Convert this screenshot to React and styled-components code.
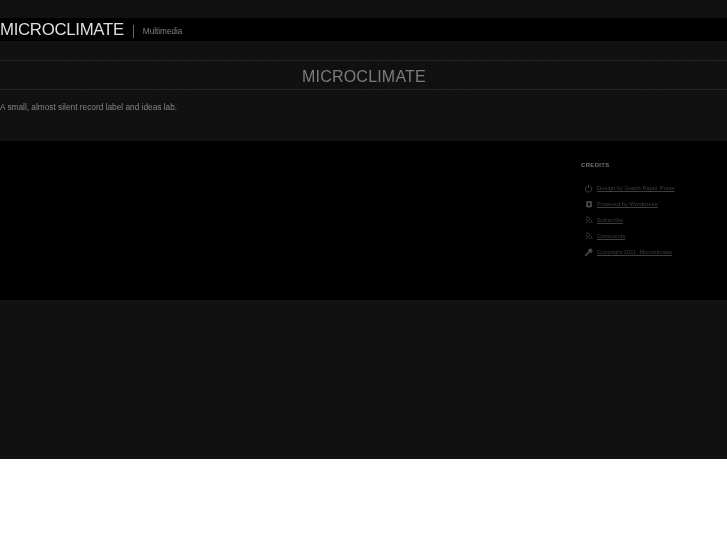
import React from "react";
import styled, { createGlobalStyle } from "styled-components";

const Global = createGlobalStyle`
  html, body { margin: 0; padding: 0; background: #fff; }
  body { font-family: "Liberation Sans", Arial, sans-serif; }
`;

const Page = styled.div`
  background: #111;
  height: 459px;
  padding-top: 18px;
  box-sizing: border-box;
  overflow: hidden;
`;

const Header = styled.header`
  background: #000;
  height: 23px;
  display: flex;
  align-items: center;
`;

const Logo = styled.h1`
  margin: 0;
  font-size: 16.8px;
  letter-spacing: -0.3px;
  font-weight: 400;
  color: #dedede;
  line-height: 23px;
  filter: blur(0.3px);
`;

const Divider = styled.span`
  width: 1px;
  height: 13px;
  margin: 4px 9px 0 9px;
  background: #666;
`;

const Tagline = styled.span`
  font-size: 8.2px;
  color: #808080;
  margin-top: 3px;
  filter: blur(0.35px);
`;

const TitleBand = styled.div`
  margin-top: 19px;
  height: 30px;
  box-sizing: border-box;
  border-top: 1px solid #252525;
  border-bottom: 1px solid #252525;
  background: repeating-linear-gradient(45deg, #0e0e0e 0 1px, #121212 1px 3px);
  display: flex;
  align-items: center;
  justify-content: center;
`;

const Title = styled.h2`
  margin: 3px 0 0 1px;
  font-size: 16px;
  font-weight: 400;
  color: #7c7c7c;
  letter-spacing: 0.2px;
  filter: blur(0.3px);
`;

const Intro = styled.p`
  margin: 0;
  height: 51px;
  padding-top: 11px;
  box-sizing: border-box;
  font-size: 8.3px;
  line-height: 12px;
  color: #858585;
  filter: blur(0.35px);
`;

const Footer = styled.footer`
  background: #000;
  height: 159px;
  display: flex;
  justify-content: flex-end;
`;

const Credits = styled.section`
  width: 146px;
  padding-top: 20px;
  box-sizing: border-box;
`;

const CreditsTitle = styled.h3`
  margin: 0 0 11px;
  font-size: 5.9px;
  line-height: 8px;
  font-weight: 700;
  color: #777;
  letter-spacing: 0.4px;
  filter: blur(0.3px);
`;

const CreditList = styled.ul`
  list-style: none;
  margin: 0;
  padding: 0 0 0 3px;
`;

const CreditItem = styled.li`
  display: flex;
  align-items: center;
  height: 16px;
  gap: 4px;
`;

const IconSlot = styled.span`
  width: 9px;
  display: flex;
  justify-content: center;
  color: #444;
  filter: blur(0.3px);
`;

const CreditLink = styled.a`
  font-size: 5.85px;
  color: #3e3e3e;
  text-decoration: underline;
  filter: blur(0.3px);
`;

const PowerIcon = () => (
  <svg width="9" height="9" viewBox="0 0 9 9" fill="none" stroke="currentColor" strokeWidth="1">
    <path d="M2.6 2.2a3.2 3.2 0 1 0 3.8 0" />
    <path d="M4.5 0.8v3" />
  </svg>
);

const GearIcon = () => (
  <svg width="8" height="8" viewBox="0 0 8 8" fill="currentColor">
    <path fillRule="evenodd" d="M1 1.5h1V1h4v.5h1V7H6v.5H2V7H1zM4 3a1.2 1.2 0 1 0 0 2.4A1.2 1.2 0 0 0 4 3z" />
  </svg>
);

const FeedIcon = () => (
  <svg width="8" height="8" viewBox="0 0 8 8" fill="none" stroke="currentColor" strokeWidth="0.9">
    <path d="M1 1a6 6 0 0 1 6 6" />
    <path d="M1 3.5A3.5 3.5 0 0 1 4.5 7" />
    <circle cx="1.6" cy="6.4" r="0.7" fill="currentColor" stroke="none" />
  </svg>
);

const KeyIcon = () => (
  <svg width="9" height="9" viewBox="0 0 9 9" fill="currentColor">
    <circle cx="6.3" cy="2.7" r="2.2" />
    <path d="M4.6 3.2 5.8 4.4 2 8.2 0.8 8.2 0.8 7z" />
  </svg>
);

const credits = [
  [PowerIcon, "Design by Graph Paper Press"],
  [GearIcon, "Powered by Wordpress"],
  [FeedIcon, "Subscribe"],
  [FeedIcon, "Comments"],
  [KeyIcon, "Copyright 2011, Microclimate"],
];

export default function App() {
  return (
    <>
      <Global />
      <Page>
        <Header>
          <Logo>MICROCLIMATE</Logo>
          <Divider />
          <Tagline>Multimedia</Tagline>
        </Header>
        <TitleBand>
          <Title>MICROCLIMATE</Title>
        </TitleBand>
        <Intro>A small, almost silent record label and ideas lab.</Intro>
        <Footer>
          <Credits>
            <CreditsTitle>CREDITS</CreditsTitle>
            <CreditList>
              {credits.map(([Icon, label]) => (
                <CreditItem key={label}>
                  <IconSlot><Icon /></IconSlot>
                  <CreditLink href="#">{label}</CreditLink>
                </CreditItem>
              ))}
            </CreditList>
          </Credits>
        </Footer>
      </Page>
    </>
  );
}
